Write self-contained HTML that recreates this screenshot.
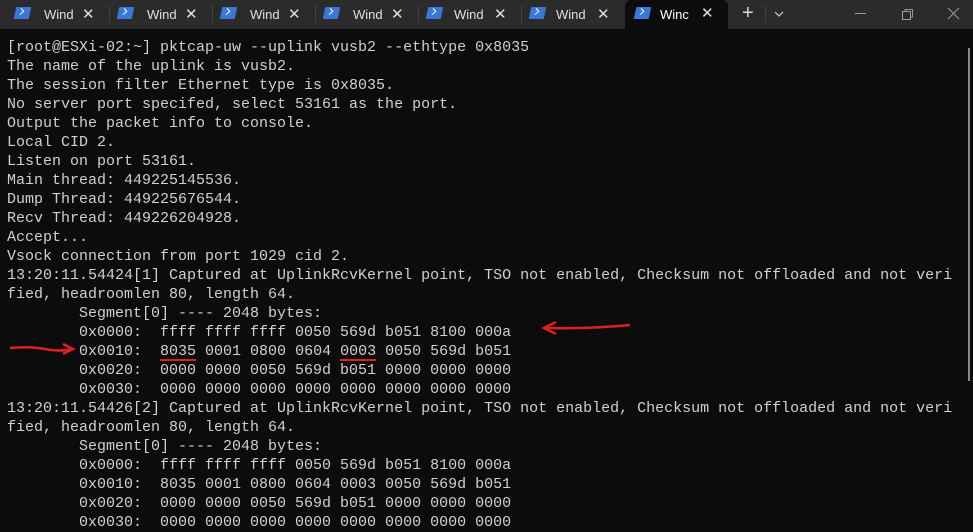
<!DOCTYPE html>
<html><head><meta charset="utf-8"><style>
html,body{margin:0;padding:0;width:973px;height:531px;overflow:hidden;background:#0c0c0c;}
#bar{position:absolute;left:0;top:0;width:973px;height:29px;background:#2b2b2b;}
.tab{position:absolute;top:0;height:29px;width:103px;font:13px "Liberation Sans",sans-serif;color:#e0e0e0;}
.tab .ic{position:absolute;left:12px;top:7px;width:15px;height:12px;background:#3a78d8;transform:skewX(-12deg);border-radius:1px;}
.tab .ic:after{content:"";position:absolute;left:3px;top:2px;width:4px;height:4px;border-right:1.5px solid #fff;border-bottom:1.5px solid #fff;transform:rotate(-45deg);}
.tab .t{position:absolute;left:41px;top:7px;}
.tab .x{position:absolute;left:79px;top:5px;font-size:15px;color:#ddd;}
.sep{position:absolute;top:6px;width:1px;height:17px;background:#444;}
#act{background:#0c0c0c;border-radius:6px 6px 0 0;}
#term{position:absolute;left:7px;top:38px;font:15px/19px "Liberation Mono",monospace;color:#d0d0d0;white-space:pre;margin:0;}
.ul{text-decoration:underline;text-decoration-color:#e02020;text-decoration-thickness:2px;text-underline-offset:4px;}
</style></head><body>
<div id="bar">
<div class="tab" style="left:3px"><div class="ic"></div><span class="t">Wind</span><span class="x">✕</span></div>
<div class="sep" style="left:109px"></div>
<div class="tab" style="left:106px"><div class="ic"></div><span class="t">Wind</span><span class="x">✕</span></div>
<div class="sep" style="left:212px"></div>
<div class="tab" style="left:209px"><div class="ic"></div><span class="t">Wind</span><span class="x">✕</span></div>
<div class="sep" style="left:315px"></div>
<div class="tab" style="left:312px"><div class="ic"></div><span class="t">Wind</span><span class="x">✕</span></div>
<div class="sep" style="left:418px"></div>
<div class="tab" style="left:415px"><div class="ic"></div><span class="t" style="left:39px">Wind</span><span class="x">✕</span></div>
<div class="sep" style="left:521px"></div>
<div class="tab" style="left:518px"><div class="ic"></div><span class="t" style="left:38px">Wind</span><span class="x">✕</span></div>
<div class="tab" id="act" style="left:625px;width:103px"><div class="ic" style="left:10px"></div><span class="t" style="left:35px;color:#fff">Winc</span><span class="x" style="left:76px;top:4px">✕</span></div>
<div style="position:absolute;left:742px;top:2px;font:20px 'Liberation Sans',sans-serif;color:#ddd">+</div>
<div class="sep" style="left:765px"></div>
<svg style="position:absolute;left:774px;top:10px" width="10" height="8"><path d="M1 2 L5 6 L9 2" stroke="#ccc" fill="none" stroke-width="1.2"/></svg>
<div style="position:absolute;left:855px;top:13px;width:11px;height:1px;background:#999"></div>
<svg style="position:absolute;left:901px;top:8px" width="13" height="13"><rect x="1.5" y="3.5" width="8" height="8" stroke="#999" fill="none"/><path d="M4 3.5 V1.5 H11.5 V9 H9.5" stroke="#999" fill="none"/></svg>
<svg style="position:absolute;left:947px;top:7px" width="13" height="13"><path d="M1 1 L12 12 M12 1 L1 12" stroke="#999" stroke-width="1.1"/></svg>
</div>
<div style="position:absolute;left:968px;top:48px;width:2px;height:333px;background:#8a8a8a"></div>
<pre id="term">[root@ESXi-02:~] pktcap-uw --uplink vusb2 --ethtype 0x8035
The name of the uplink is vusb2.
The session filter Ethernet type is 0x8035.
No server port specifed, select 53161 as the port.
Output the packet info to console.
Local CID 2.
Listen on port 53161.
Main thread: 449225145536.
Dump Thread: 449225676544.
Recv Thread: 449226204928.
Accept...
Vsock connection from port 1029 cid 2.
13:20:11.54424[1] Captured at UplinkRcvKernel point, TSO not enabled, Checksum not offloaded and not veri
fied, headroomlen 80, length 64.
        Segment[0] ---- 2048 bytes:
        0x0000:  ffff ffff ffff 0050 569d b051 8100 000a
        0x0010:  <span class="ul">8035</span> 0001 0800 0604 <span class="ul">0003</span> 0050 569d b051
        0x0020:  0000 0000 0050 569d b051 0000 0000 0000
        0x0030:  0000 0000 0000 0000 0000 0000 0000 0000
13:20:11.54426[2] Captured at UplinkRcvKernel point, TSO not enabled, Checksum not offloaded and not veri
fied, headroomlen 80, length 64.
        Segment[0] ---- 2048 bytes:
        0x0000:  ffff ffff ffff 0050 569d b051 8100 000a
        0x0010:  8035 0001 0800 0604 0003 0050 569d b051
        0x0020:  0000 0000 0050 569d b051 0000 0000 0000
        0x0030:  0000 0000 0000 0000 0000 0000 0000 0000</pre>
<svg style="position:absolute;left:0;top:0" width="973" height="531">
<path d="M10 348 Q30 346 45 349 T72 349" stroke="#e02020" stroke-width="2.5" fill="none"/>
<path d="M63 344 L73 349 L63 354" stroke="#e02020" stroke-width="2.5" fill="none"/>
<path d="M545 328 Q590 329 630 325" stroke="#e02020" stroke-width="2.5" fill="none"/>
<path d="M556 322 L544 328 L556 334" stroke="#e02020" stroke-width="2.5" fill="none"/>
</svg>
</body></html>
